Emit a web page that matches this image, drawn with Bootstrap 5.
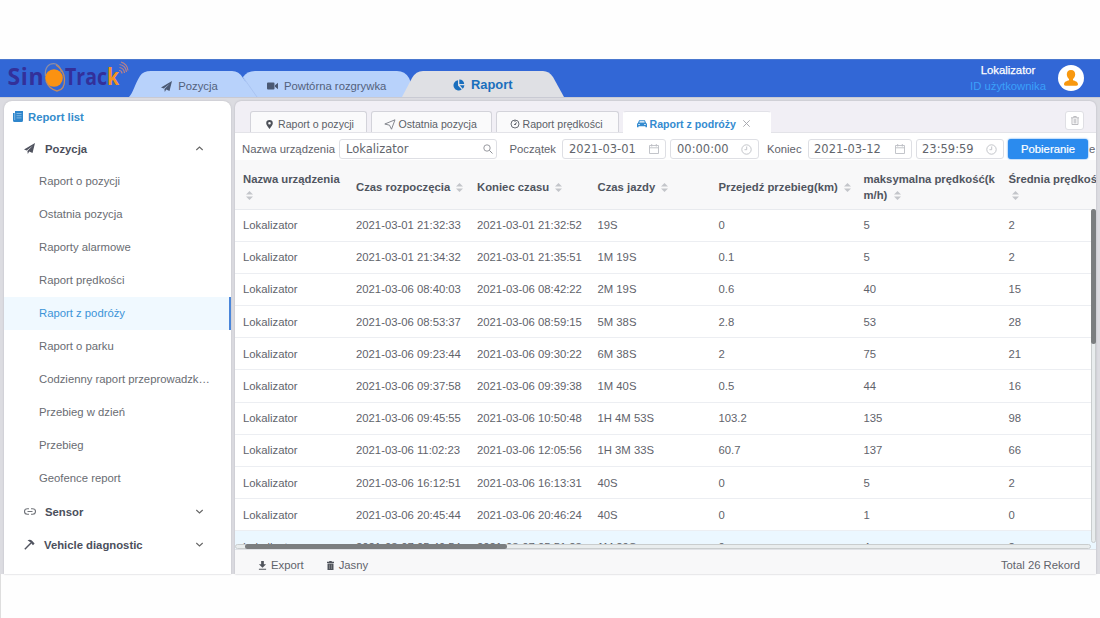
<!DOCTYPE html>
<html lang="pl">
<head>
    <meta charset="UTF-8">
    <meta name="viewport" content="width=device-width, initial-scale=1.0">
    <title>SinoTrack - Raport</title>
    <link rel="stylesheet" href="https://cdn.jsdelivr.net/npm/bootstrap@5.3.0/dist/css/bootstrap.min.css">
    <style>
        body {
            font-family: "Liberation Sans", Arial, sans-serif;
            font-size: 11.3px;
            line-height: 16px;
            color: #5f636b;
            background: #fefefe;
            padding-top: 59px;
            height: 618px;
            overflow: hidden;
        }
        svg { display: block; flex: none; }
        .page {
            height: 515px;
            background: #dcdce1;
        }
        .topbar {
            height: 38px;
            background: #3267d6;
            border-top: 1px solid #4a78cf;
        }
        .logo { width: 129px; }
        .top-tab {
            position: relative;
            height: 26px;
            color: #53617c;
        }
        .top-tab .shape {
            position: absolute;
            left: 0;
            top: 0;
        }
        .top-tab .caption {
            position: relative;
            padding-top: 7px;
        }
        .tab-a { width: 129px; }
        .tab-b { width: 176px; margin-left: -17px; }
        .tab-c { width: 162px; margin-left: -15px; }
        .tab-c .caption { color: #1a6fbd; font-size: 12.9px; font-weight: bold; padding-top: 6px; }
        .user-name { color: #fff; -webkit-text-stroke: .25px #fff; }
        .user-id { color: #3ba0fa; }
        .work {
            height: 477px;
            padding: 3px 4px 0 4px;
            border-top: 1px solid #c9cad3;
            gap: 4px;
        }
        .side {
            width: 227px;
            background: #fff;
            border-radius: 8px 8px 0 0;
            box-shadow: 0 0 2px #b8b8bd;
        }
        .side-title {
            height: 31px;
            padding-left: 9px;
            color: #348ccc;
            font-weight: bold;
        }
        .side-head {
            height: 33px;
            padding: 0 27px 0 20px;
            color: #4b4f5c;
            font-weight: bold;
        }
        .side-item {
            height: 33px;
            padding: 0 21px 0 35px;
            line-height: 32px;
            color: #696c72;
        }
        .side-item.current {
            color: #3c94d8;
            background: #f0f9ff;
            border-right: 2px solid #4a86da;
        }
        .main {
            width: 861px;
            background: #f1eff5;
            border-radius: 6px 6px 0 0;
            overflow: hidden;
            box-shadow: 0 0 2px #b0b0b8;
        }
        .sub-tabs {
            height: 31px;
            padding: 10px 12px 0 15px;
            font-size: 10.6px;
            gap: 3.5px;
        }
        .sub-tab {
            height: 21px;
            background: #fafafb;
            border: 1px solid #d3d3da;
            border-bottom: 0;
            border-radius: 3px 3px 0 0;
            color: #5b5f67;
            padding-top: 4px;
        }
        .sub-tab.current {
            height: 22px;
            background: #fff;
            border-color: #e2e2e8 #fff;
            color: #348bd0;
            font-weight: bold;
            padding-top: 2px;
        }
        .trash {
            width: 19px;
            height: 19px;
            background: #fff;
            border: 1px solid #dfdfe4;
            border-radius: 3px;
        }
        .filters {
            height: 28px;
            padding: 0 0 0 7px;
            background: #fff;
            border-top: 1px solid #e3e3e8;
        }
        .field {
            height: 20px;
            margin-top: 6px;
            padding: 0 6px;
            border: 1px solid #dedfe4;
            border-radius: 3px;
            background: #fff;
            font-family: "DejaVu Sans", Verdana, sans-serif;
            font-size: 11.5px;
            color: #62656c;
        }
        .filters .caption { margin-top: 6px; white-space: nowrap; line-height: 13px; }
        .btn-get {
            width: 80px;
            height: 20px;
            margin-top: 6px;
            padding: 0;
            border: 0;
            border-radius: 3px;
            background: #2b8bee;
            color: #fff;
            font-size: 11.3px;
            line-height: 19px;
            -webkit-text-stroke: .2px #fff;
            box-shadow: 0 0 2px #2b8bee;
        }
        .btn-get:hover { background: #1c7be0; color: #fff; }
        .grid-box {
            position: relative;
            height: 389px;
            background: #fff;
            overflow: hidden;
        }
        .grid {
            width: 960px;
            table-layout: fixed;
            border-collapse: separate;
            border-spacing: 0;
        }
        .grid th {
            height: 49.5px;
            padding: 5px 0 0 8px;
            background: #f8f8f9;
            border-bottom: 1px solid #e8eaee;
            color: #50555f;
            font-weight: bold;
            vertical-align: middle;
        }
        .grid td {
            height: 32.2px;
            padding: 0 0 0 8px;
            border-bottom: 1px solid #eceef2;
            vertical-align: middle;
            white-space: nowrap;
        }
        .grid tr.hovered td { background: #ebf7ff; }
        .sorter { display: inline-block; margin-left: 3px; vertical-align: -2px; }
        .bar-x {
            position: absolute;
            left: 0;
            bottom: 0;
            width: 856px;
            height: 5px;
            border: 1px solid #c9cdce;
            border-radius: 3px;
            background: #e9edee;
        }
        .bar-x div {
            width: 262px;
            height: 5px;
            margin: -1px 0 0 9px;
            border-radius: 3px;
            background: #7b7e80;
        }
        .bar-y {
            position: absolute;
            right: 0;
            top: 49px;
            width: 5px;
            height: 334px;
            border: 1px solid #c9cdce;
            border-radius: 3px;
            background: #e9edee;
        }
        .bar-y div {
            width: 5px;
            height: 135px;
            margin: -1px 0 0 -1px;
            border-radius: 3px;
            background: #7b7e80;
        }
        .foot {
            height: 25px;
            padding: 7px 16px 0 23px;
            background: #f8f8f9;
            border-top: 1px solid #e0e2e6;
        }
        .page-edge {
            width: 1px;
            height: 44px;
            background: #dedede;
        }
    </style>
</head>
<body>

    <div class="page">
        <header class="topbar d-flex align-items-end">
            <svg class="logo" width="129" height="37" viewBox="0 0 129 37">
                <g font-family="Open Sans, sans-serif" font-weight="bold" font-size="23">
                    <text x="7.500" y="25" textLength="36" lengthAdjust="spacing" fill="#33309a">Sin</text>
                    <text x="65" y="25" textLength="54" lengthAdjust="spacingAndGlyphs" fill="#33309a">Trac<tspan fill="#f59320">k</tspan></text>
                </g>
                <circle cx="54" cy="18" r="8.800" fill="#fb9211"/>
                <g fill="none" stroke-width="1.300">
                    <path d="M45.500 16C44.500 7 49 3.500 54 3.700C59 4 60.500 8 61.500 12" stroke="#8c8da6"/>
                    <path d="M46 21Q49 29 57 31Q65 30 64.500 19Q64 10 56 5" stroke="#c08a62"/>
                </g>
                <g fill="none" stroke="#b8818a" stroke-width="1.200">
                    <path d="M119 10.500a3 3 0 0 1 3 3M119.500 7.500a6 6 0 0 1 5 5.500M119.500 4.500a8.500 8.500 0 0 1 7 7.500M121 2a10 10 0 0 1 7 8.500"/>
                </g>
            </svg>
            <nav class="d-flex">
                <a class="top-tab tab-a text-decoration-none" href="#">
                    <svg class="shape" width="129" height="26"><path d="M0 26C4 22 6 13 11 5Q14 0 22 0H103Q110 0 114 7L128 26Z" fill="#b8d2fb"/></svg>
                    <span class="caption d-flex align-items-center">
                        <svg class="ms-auto" style="margin-right:6px" width="11" height="11" viewBox="0 0 11 11"><path d="M0 6.500L11 0 8.500 10 5.200 8.500 3.800 11 3.400 8 9 2.500 2.700 7.500Z" fill="#4b5973"/></svg>
                        <span class="me-auto pe-2">Pozycja</span>
                    </span>
                </a>
                <a class="top-tab tab-b text-decoration-none" href="#">
                    <svg class="shape" width="176" height="26"><path d="M2 6Q6 0 14 0H156Q164 0 168 7L176 26H12Z" fill="#b8d2fb"/><path d="M2 6L16 26" stroke="#a9c4f1" fill="none"/></svg>
                    <span class="caption d-flex align-items-center" style="padding-left:26px;gap:6px">
                        <svg width="11" height="8" viewBox="0 0 11 8"><path d="M0 1.500Q0 .5 1 .5H6.500Q7.500 .5 7.500 1.500V6.500Q7.500 7.500 6.500 7.500H1Q0 7.500 0 6.500ZM8 3.200L11 .8V7.200L8 4.800Z" fill="#4b5973"/></svg>
                        Powtórna rozgrywka
                    </span>
                </a>
                <a class="top-tab tab-c text-decoration-none" href="#">
                    <svg class="shape" width="162" height="26"><path d="M0 26L10 7Q14 0 21 0H141Q147 0 151 6L162 26Z" fill="#dfe0e4"/></svg>
                    <span class="caption d-flex align-items-center" style="padding-left:51px;gap:6px">
                        <svg width="12" height="12" viewBox="0 0 12 12"><path d="M5 1.200V6.500L8.700 10.600A5.200 5.200 0 1 1 5 1.200Z" fill="#1a6fbd"/><path d="M6.300 .5A5 5 0 0 1 11.200 5H6.300ZM6.800 6.200H11.400A5 5 0 0 1 9.700 9.700Z" fill="#1a6fbd"/></svg>
                        Raport
                    </span>
                </a>
            </nav>
            <div class="ms-auto text-center align-self-start">
                <div class="user-name" style="margin-top:2px">Lokalizator</div>
                <div class="user-id">ID użytkownika</div>
            </div>
            <svg class="align-self-start" style="margin:5px 16px 0 12px" width="26" height="26" viewBox="0 0 26 26">
                <circle cx="13" cy="13" r="13" fill="#fff"/>
                <path d="M13 5C15.800 5 17.300 7 17.200 9.500C17.100 11.500 16 13 15 14V15.300C17 16.200 20 16.500 20 19.500Q19.800 20.800 18 20.800H8Q6.200 20.800 6 19.500C6 16.500 9 16.200 11 15.300V14C10 13 8.900 11.500 8.800 9.500C8.700 7 10.200 5 13 5Z" fill="#f8980f"/>
            </svg>
        </header>

        <div class="work d-flex">
            <aside class="side">
                <div class="side-title d-flex align-items-center">
                    <svg class="me-1" width="11" height="11" viewBox="0 0 11 11"><path d="M2 0H10V9.500Q10 11 8.500 11H1.500Q0 11 0 9.500V2H2Z" fill="#2f86cc"/><path d="M3.500 2.500H8.500M3.500 4.700H8.500M3.500 6.900H8.500M1.700 2V9" stroke="#a5cdee" stroke-width=".7"/></svg>
                    Report list
                </div>
                <div class="side-head d-flex align-items-center">
                    <svg style="margin-right:10px" width="11" height="11" viewBox="0 0 11 11"><path d="M0 6.500L11 0 8.500 10 5.200 8.500 3.800 11 3.400 8 9 2.500 2.700 7.500Z" fill="#50535f"/></svg>
                    Pozycja
                    <svg class="ms-auto" width="9" height="9" viewBox="0 0 9 9"><path d="M1.300 6L4.500 3 7.700 6" fill="none" stroke="#666" stroke-width="1.100"/></svg>
                </div>
                <div id="sideItems"></div>
                <div class="side-head d-flex align-items-center">
                    <svg style="margin-right:9px" width="12" height="7" viewBox="0 0 12 7"><path d="M5 .8H3.200A2.700 2.700 0 0 0 3.200 6.200H5M7 .8H8.800A2.700 2.700 0 0 1 8.800 6.200H7M3.500 3.500H8.500" fill="none" stroke="#707379" stroke-width="1.100"/></svg>
                    Sensor
                    <svg class="ms-auto" width="9" height="9" viewBox="0 0 9 9"><path d="M1.300 3L4.500 6 7.700 3" fill="none" stroke="#666" stroke-width="1.100"/></svg>
                </div>
                <div class="side-head d-flex align-items-center">
                    <svg style="margin-right:9px" width="11" height="11" viewBox="0 0 11 11"><path d="M.8 10.200L7 4" stroke="#50535f" stroke-width="1.400"/><path d="M3.500 1.200Q6.500 0 8.300 2L10.600 4.500 9 6.200 6 3Z" fill="#50535f"/></svg>
                    Vehicle diagnostic
                    <svg class="ms-auto" width="9" height="9" viewBox="0 0 9 9"><path d="M1.300 3L4.500 6 7.700 3" fill="none" stroke="#666" stroke-width="1.100"/></svg>
                </div>
            </aside>

            <main class="main">
                <div class="sub-tabs d-flex">
                    <div class="sub-tab d-flex align-items-center" style="width:117px;gap:5px;padding-left:15px">
                        <svg width="7" height="9" viewBox="0 0 7 9"><path fill-rule="evenodd" d="M3.500 0A3.300 3.300 0 0 1 6.800 3.300C6.800 5.500 4.500 7.500 3.500 9C2.500 7.500 .2 5.500 .2 3.300A3.300 3.300 0 0 1 3.500 0ZM3.500 2A1.300 1.300 0 1 0 3.500 4.600A1.300 1.300 0 1 0 3.500 2Z" fill="#4c5058"/></svg>
                        Raport o pozycji
                    </div>
                    <div class="sub-tab d-flex align-items-center" style="width:121.500px;gap:3px;padding-left:12px">
                        <svg width="12" height="11" viewBox="0 0 12 11"><path d="M.8 5L11 .8 7.500 10.200 5.500 6.200Z" fill="none" stroke="#777b82" stroke-width=".9"/></svg>
                        Ostatnia pozycja
                    </div>
                    <div class="sub-tab d-flex align-items-center" style="width:123.500px;gap:3px;padding-left:13px">
                        <svg width="10" height="10" viewBox="0 0 10 10"><circle cx="5" cy="5" r="4" fill="none" stroke="#6a6e75"/><path d="M5 1V3M5 5L7 3.500M4 5.500H6" stroke="#6a6e75"/></svg>
                        Raport prędkości
                    </div>
                    <div class="sub-tab current d-flex align-items-center" style="width:148px;gap:3px;padding-left:13px">
                        <svg width="10" height="8" viewBox="0 0 11 8"><path fill-rule="evenodd" d="M2.300 0H8.700L10 3Q11 3.500 11 4.500V7.500H9.300V6.500H1.700V7.500H0V4.500Q0 3.500 1 3ZM3 1.100L2.500 2.400H8.500L8 1.100ZM1.500 4V5H3V4ZM8 4V5H9.500V4Z" fill="#348bd0"/></svg>
                        Raport z podróży
                        <svg style="margin-left:3px" width="9" height="9" viewBox="0 0 9 9"><path d="M1.300 1.300L7.700 7.700M7.700 1.300L1.300 7.700" stroke="#a0a2a8" stroke-width=".9"/></svg>
                    </div>
                    <div class="trash ms-auto d-flex align-items-center justify-content-center">
                        <svg width="8" height="9" viewBox="0 0 8 9"><path d="M0 1.800H8M2.700 1.500V.5H5.300V1.500M1 2V8.500H7V2M3.200 3V7.500M4.800 3V7.500" fill="none" stroke="#b5b5ba" stroke-width=".9"/></svg>
                    </div>
                </div>

                <div class="filters d-flex align-items-start">
                    <span class="caption pt-1" style="width:97px">Nazwa urządzenia</span>
                    <div class="field d-flex align-items-center" style="width:158px;padding-right:3px">Lokalizator
                        <svg class="ms-auto" width="10" height="10" viewBox="0 0 10 10"><circle cx="4" cy="4" r="3.200" fill="none" stroke="#8d9096" stroke-width=".9"/><path d="M6.400 6.400L9.500 9.500" stroke="#8d9096"/></svg>
                    </div>
                    <span class="caption pt-1" style="margin-left:12.500px;width:52.500px">Początek</span>
                    <div class="field d-flex align-items-center" style="width:104px">2021-03-01<svg class="ms-auto" width="10" height="10" viewBox="0 0 10 10"><path d="M.5 1.500H9.500V9.500H.5ZM.5 3.800H9.500M2.700 0V2.500M7.300 0V2.500" fill="none" stroke="#bcbec4" stroke-width=".9"/></svg></div>
                    <div class="field d-flex align-items-center" style="width:88.500px;margin-left:4px">00:00:00<svg class="ms-auto" width="11" height="11" viewBox="0 0 11 11"><circle cx="5.500" cy="5.500" r="4.700" fill="none" stroke="#bcbec4" stroke-width=".9"/><path d="M5.700 2.500V5.700H3.500" fill="none" stroke="#bcbec4" stroke-width=".9"/></svg></div>
                    <span class="caption pt-1" style="margin-left:8.500px;width:41px">Koniec</span>
                    <div class="field d-flex align-items-center" style="width:104px;padding-left:5px">2021-03-12<svg class="ms-auto" width="10" height="10" viewBox="0 0 10 10"><path d="M.5 1.500H9.500V9.500H.5ZM.5 3.800H9.500M2.700 0V2.500M7.300 0V2.500" fill="none" stroke="#bcbec4" stroke-width=".9"/></svg></div>
                    <div class="field d-flex align-items-center" style="width:88px;margin-left:4px;padding-left:5px">23:59:59<svg class="ms-auto" width="11" height="11" viewBox="0 0 11 11"><circle cx="5.500" cy="5.500" r="4.700" fill="none" stroke="#bcbec4" stroke-width=".9"/><path d="M5.700 2.500V5.700H3.500" fill="none" stroke="#bcbec4" stroke-width=".9"/></svg></div>
                    <button class="btn btn-get" style="margin-left:4px">Pobieranie</button>
                    <span class="caption pt-1" style="margin-left:1px">e</span>
                </div>

                <div class="grid-box">
                    <table class="grid">
                        <colgroup>
                            <col style="width:113px"><col style="width:121px"><col style="width:120.500px"><col style="width:121px">
                            <col style="width:145px"><col style="width:145px"><col>
                        </colgroup>
                        <thead><tr id="gridHead"></tr></thead>
                        <tbody id="gridBody"></tbody>
                    </table>
                    <div class="bar-y"><div></div></div>
                    <div class="bar-x"><div></div></div>
                </div>

                <div class="foot d-flex align-items-start">
                    <svg style="margin-top:4px" width="9" height="9" viewBox="0 0 9 10"><path d="M3 0H6V3.500H8.500L4.500 7.500 .5 3.500H3ZM.5 8.500H8.500V9.700H.5Z" fill="#50545c"/></svg>
                    <span style="margin-left:4px">Export</span>
                    <svg style="margin:4px 0 0 23px" width="7" height="9" viewBox="0 0 7 9"><path d="M0 .8H2L2.500 0H4.500L5 .8H7V2H0ZM.5 2.500H6.500V9H.5Z" fill="#50545c"/><path d="M2.500 3.500V8M4.500 3.500V8" stroke="#999" stroke-width=".6"/></svg>
                    <span style="margin-left:5px">Jasny</span>
                    <span class="ms-auto">Total 26 Rekord</span>
                </div>
            </main>
        </div>
    </div>
    <div class="page-edge"></div>

    <script src="https://cdn.jsdelivr.net/npm/bootstrap@5.3.0/dist/js/bootstrap.bundle.min.js"></script>
    <script>
        const sideItems = ["Raport o pozycji", "Ostatnia pozycja", "Raporty alarmowe", "Raport prędkości", "Raport z podróży",
            "Raport o parku", "Codzienny raport przeprowadzk…", "Przebieg w dzień", "Przebieg", "Geofence report"];
        const heads = ["Nazwa urządzenia<br>", "Czas rozpoczęcia", "Koniec czasu", "Czas jazdy", "Przejedź przebieg(km)",
            "maksymalna prędkość(k<br>m/h)", "Średnia prędkość<br>"];
        const rows = [
            ["2021-03-01 21:32:33", "2021-03-01 21:32:52", "19S", "0", "5", "2"],
            ["2021-03-01 21:34:32", "2021-03-01 21:35:51", "1M 19S", "0.1", "5", "2"],
            ["2021-03-06 08:40:03", "2021-03-06 08:42:22", "2M 19S", "0.6", "40", "15"],
            ["2021-03-06 08:53:37", "2021-03-06 08:59:15", "5M 38S", "2.8", "53", "28"],
            ["2021-03-06 09:23:44", "2021-03-06 09:30:22", "6M 38S", "2", "75", "21"],
            ["2021-03-06 09:37:58", "2021-03-06 09:39:38", "1M 40S", "0.5", "44", "16"],
            ["2021-03-06 09:45:55", "2021-03-06 10:50:48", "1H 4M 53S", "103.2", "135", "98"],
            ["2021-03-06 11:02:23", "2021-03-06 12:05:56", "1H 3M 33S", "60.7", "137", "66"],
            ["2021-03-06 16:12:51", "2021-03-06 16:13:31", "40S", "0", "5", "2"],
            ["2021-03-06 20:45:44", "2021-03-06 20:46:24", "40S", "0", "1", "0"],
            ["2021-03-07 05:49:54", "2021-03-07 05:51:23", "1M 29S", "0", "4", "2"]
        ];
        const sorter = `<svg class="sorter" width="7" height="11" viewBox="0 0 7 11"><path d="M0 4.500L3.500 1 7 4.500ZM0 6.500H7L3.500 10Z" fill="#c3c5ca"/></svg>`;

        document.getElementById("sideItems").innerHTML = sideItems
            .map((t, i) => `<div class="side-item text-nowrap ${i === 4 ? "current" : ""}">${t}</div>`).join("");
        document.getElementById("gridHead").innerHTML = heads
            .map(t => `<th class="text-nowrap">${t} ${sorter}</th>`).join("");
        // last row is the one under the pointer
        document.getElementById("gridBody").innerHTML = rows
            .map((r, i) => `<tr class="${i === rows.length - 1 ? "hovered" : ""}"><td>Lokalizator</td>${r.map(c => `<td>${c}</td>`).join("")}</tr>`).join("");
    </script>
</body>
</html>
